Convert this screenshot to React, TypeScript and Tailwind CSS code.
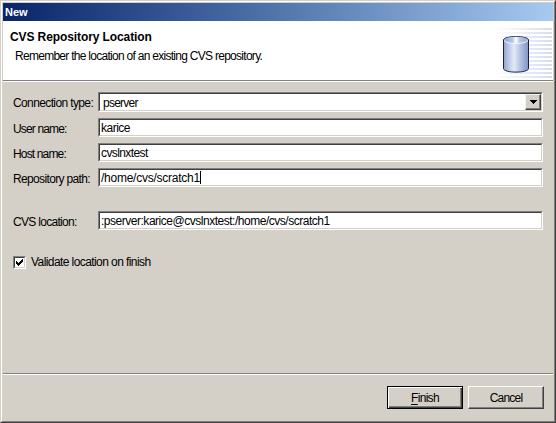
import React from "react";

const sunken =
  "border border-t-[#808080] border-l-[#808080] border-r-white border-b-white";
const sunkenInner =
  "border border-t-[#404040] border-l-[#404040] border-r-[#d4d0c8] border-b-[#d4d0c8] bg-white";

type FieldProps = {
  label: string;
  value: string;
  labelSpacing: string;
  valueSpacing: string;
  className: string;
  combo?: boolean;
  caret?: boolean;
};

function Field({ label, value, labelSpacing, valueSpacing, className, combo, caret }: FieldProps) {
  return (
    <div className={`flex items-center ${className}`}>
      <label className={`w-[85px] shrink-0 whitespace-nowrap leading-4 ${combo ? "pt-px" : "pt-[3px]"} ${labelSpacing}`}>{label}</label>
      <div className={`flex h-full w-[445px] ${sunken}`}>
        <div className={`flex h-full w-full items-center ${sunkenInner}`}>
          <span className={`whitespace-nowrap leading-4 ${combo ? "pl-[3px] pt-px" : "pl-px"} ${valueSpacing}`}>{value}</span>
          {caret && <span className="h-[13px] w-px bg-black" />}
          {combo && (
            <div className="ml-auto flex h-full w-4 items-center justify-center border border-t-[#f4f2ee] border-l-[#f4f2ee] border-r-[#404040] border-b-[#404040] bg-[#d4d0c8] shadow-[inset_-1px_-1px_#808080]">
              <svg width="7" height="4" viewBox="0 0 7 4" shapeRendering="crispEdges">
                <path d="M0 0H7V1H6V2H5V3H4V4H3V3H2V2H1V1H0Z" />
              </svg>
            </div>
          )}
        </div>
      </div>
    </div>
  );
}

function RepositoryIcon() {
  return (
    <svg width="64" height="58" viewBox="0 0 64 58" className="ml-auto">
      <defs>
        <linearGradient id="stripe" gradientUnits="userSpaceOnUse" x1="6" y1="0" x2="62" y2="0">
          <stop offset="0" stopColor="#fff" />
          <stop offset="0.55" stopColor="#e9edf7" />
          <stop offset="1" stopColor="#d5ddee" />
        </linearGradient>
        <linearGradient id="body" x1="0" x2="1">
          <stop offset="0" stopColor="#8fa3cf" />
          <stop offset="0.2" stopColor="#b9c7e6" />
          <stop offset="0.42" stopColor="#e3eaf8" />
          <stop offset="0.7" stopColor="#b0bfe0" />
          <stop offset="1" stopColor="#8093c0" />
        </linearGradient>
        <linearGradient id="lid" x1="0" x2="1">
          <stop offset="0" stopColor="#8fa5d3" />
          <stop offset="0.35" stopColor="#b5c6e8" />
          <stop offset="0.5" stopColor="#fff" />
          <stop offset="0.65" stopColor="#b5c6e8" />
          <stop offset="1" stopColor="#93a8d4" />
        </linearGradient>
      </defs>
      {[7, 11, 15, 19, 23, 27, 31, 35, 39, 43, 47, 51, 55].map((y) => (
        <rect key={y} x="8" y={y} width="55" height="2" fill="url(#stripe)" />
      ))}
      <path d="M14.5 19C14.5 14.4 39.5 14.4 39.5 19V47.5C39.5 52.3 14.5 52.3 14.5 47.5Z" fill="url(#body)" stroke="#17213f" />
      <ellipse cx="27" cy="19" rx="12" ry="3.2" fill="url(#lid)" />
      <path d="M15 19.5C18 23.5 36 23.5 39 19.5" fill="none" stroke="#eef3fb" />
    </svg>
  );
}

export default function App() {
  return (
    <div className="flex h-[423px] w-[556px] flex-col overflow-hidden border border-t-[#d4d0c8] border-l-[#d4d0c8] border-r-[#404040] border-b-[#404040] bg-[#d4d0c8] font-['Liberation_Sans',Arial,sans-serif] text-[12px] text-black">
      <div className="flex flex-1 flex-col border border-t-white border-l-white border-r-[#808080] border-b-[#808080] p-px">
        <header className="flex h-[18px] shrink-0 items-center bg-linear-to-r from-[#0a246a] to-[#a6caf0] pl-[2px] font-bold text-white">
          <span className="text-[11px] leading-4">New</span>
        </header>
        <section className="flex h-[59px] shrink-0 bg-white">
          <div className="pl-[7px] pt-2">
            <h1 className="whitespace-nowrap font-bold leading-4 tracking-[-0.1px]">CVS Repository Location</h1>
            <p className="mt-[3px] whitespace-nowrap pl-[5px] leading-4 tracking-[-0.72px]">
              Remember the location of an existing CVS repository.
            </p>
          </div>
          <RepositoryIcon />
        </section>
        <div className="h-[2px] shrink-0 border-t border-t-[#808080] bg-white" />
        <main className="flex h-[291px] shrink-0 flex-col pl-[10px] pt-[10px]">
          <Field label="Connection type:" value="pserver" labelSpacing="tracking-[-0.62px]" valueSpacing="tracking-[-0.75px]" className="h-5" combo />
          <Field label="User name:" value="karice" labelSpacing="tracking-[-0.85px]" valueSpacing="tracking-[-0.5px]" className="mt-[6px] h-[19px]" />
          <Field label="Host name:" value="cvslnxtest" labelSpacing="tracking-[-0.85px]" valueSpacing="tracking-[-0.6px]" className="mt-[6px] h-[19px]" />
          <Field label="Repository path:" value="/home/cvs/scratch1" labelSpacing="tracking-[-0.65px]" valueSpacing="tracking-[-0.25px]" className="mt-[6px] h-[19px]" caret />
          <Field label="CVS location:" value=":pserver:karice@cvslnxtest:/home/cvs/scratch1" labelSpacing="tracking-[-0.7px]" valueSpacing="tracking-[-0.48px]" className="mt-6 h-[19px]" />
          <div className="mt-[24px] flex items-center">
            <div className={`h-[13px] w-[13px] ${sunken}`}>
              <div className={`flex h-full w-full items-center justify-center ${sunkenInner}`}>
                <svg width="7" height="7" viewBox="0 0 7 7" shapeRendering="crispEdges">
                  <path d="M0 2H1V3H2V4H3V3H4V2H5V1H6V0H7V3H6V4H5V5H4V6H3V7H2V6H1V5H0Z" />
                </svg>
              </div>
            </div>
            <span className="pl-[5px] leading-4 tracking-[-0.58px]">Validate location on finish</span>
          </div>
        </main>
        <div className="h-[2px] shrink-0 border-t border-t-[#808080] bg-white" />
        <footer className="flex justify-end gap-[5px] pr-[9px] pt-[11px]">
          <button className="h-[23px] w-[76px] border border-black bg-[#d4d0c8] shadow-[inset_1px_1px_white,inset_-1px_-1px_#404040,inset_-2px_-2px_#808080]">
            <span className="leading-4 tracking-[-0.7px]"><span className="underline underline-offset-2">F</span>inish</span>
          </button>
          <button className="h-[23px] w-[76px] border border-t-white border-l-white border-r-[#404040] border-b-[#404040] bg-[#d4d0c8] shadow-[inset_-1px_-1px_#808080]">
            <span className="leading-4 tracking-[-0.8px]">Cancel</span>
          </button>
        </footer>
      </div>
    </div>
  );
}
